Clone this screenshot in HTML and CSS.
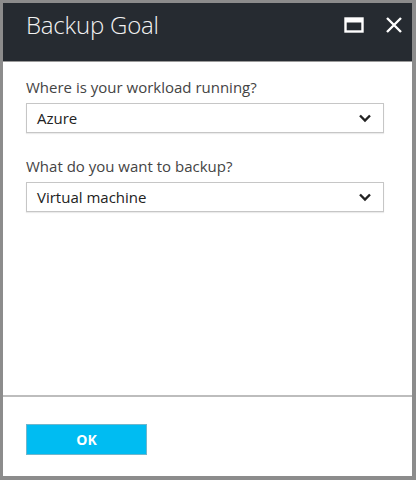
FILE: index.html
```html
<!DOCTYPE html>
<html>
<head>
<meta charset="utf-8">
<link rel="stylesheet" href="styles.css">
</head>
<body>
<div class="frame">
  <div class="header">
    <div class="title">Backup Goal</div>
    <div class="actions">
      <svg class="icon" width="20" height="18" viewBox="0 0 20 18"><rect x="1.5" y="2.5" width="17" height="13" fill="none" stroke="#fff" stroke-width="2.4"/><rect x="1.5" y="2.5" width="17" height="4" fill="#fff"/></svg>
      <svg class="icon" width="18" height="18" viewBox="0 0 18 18"><path d="M2 2 L16 16 M16 2 L2 16" stroke="#fff" stroke-width="2.4" fill="none"/></svg>
    </div>
  </div>
  <div class="content">
    <div class="field">
      <div class="label">Where is your workload running?</div>
      <div class="select"><span>Azure</span><svg class="chev" width="14" height="10" viewBox="0 0 14 10"><path d="M2 2.5 L7 7.5 L12 2.5" stroke="#222" stroke-width="2.4" fill="none"/></svg></div>
    </div>
    <div class="field">
      <div class="label">What do you want to backup?</div>
      <div class="select"><span>Virtual machine</span><svg class="chev" width="14" height="10" viewBox="0 0 14 10"><path d="M2 2.5 L7 7.5 L12 2.5" stroke="#222" stroke-width="2.4" fill="none"/></svg></div>
    </div>
  </div>
  <div class="footer">
    <button class="ok">OK</button>
  </div>
</div>
</body>
</html>
```
FILE: styles.css
```css
html, body { margin: 0; padding: 0; }
body { width: 416px; height: 480px; background: #8a8a8a; font-family: "Open Sans", "Noto Sans", sans-serif; }
.frame {
  box-sizing: border-box;
  width: 416px; height: 480px;
  border-style: solid;
  border-color: #8c8c8c;
  border-width: 3px 4px 4px 3px;
  background: #fff;
  display: flex; flex-direction: column;
}
.header {
  height: 59px;
  background: #262b31;
  display: flex; justify-content: space-between; align-items: flex-start;
  padding: 0 9px 0 23px;
  box-sizing: border-box;
  border-bottom: 1px solid #9a9a9a;
}
.title { color: #f2f2f2; font-size: 24px; font-weight: 300; line-height: 28px; margin-top: 8px; letter-spacing: -0.2px; }
.actions { display: flex; gap: 21px; margin-top: 13px; align-items: center; }
.content { flex: 1; padding: 14px 28px 0 23px; display: flex; flex-direction: column; gap: 22px; }
.label { color: #444; font-size: 15px; line-height: 22px; margin-bottom: 5px; }
.select {
  height: 30px; box-sizing: border-box;
  border: 1px solid #c6c6c6;
  box-shadow: 0 1px 1px rgba(0,0,0,0.08);
  display: flex; align-items: center; justify-content: space-between;
  padding: 0 10px 0 10px;
  color: #222; font-size: 15px;
}
.chev { margin-right: 1px; }
.footer { height: 81px; border-top: 2px solid #bdbdbd; box-sizing: border-box; padding: 27px 0 0 23px; }
.ok {
  width: 121px; height: 31px;
  background: #00bcf2; border: 1px solid #6fb6cc;
  color: #fff; font-family: "Open Sans", sans-serif; font-weight: 700; font-size: 14px;
  padding: 0; cursor: pointer;
}
```
